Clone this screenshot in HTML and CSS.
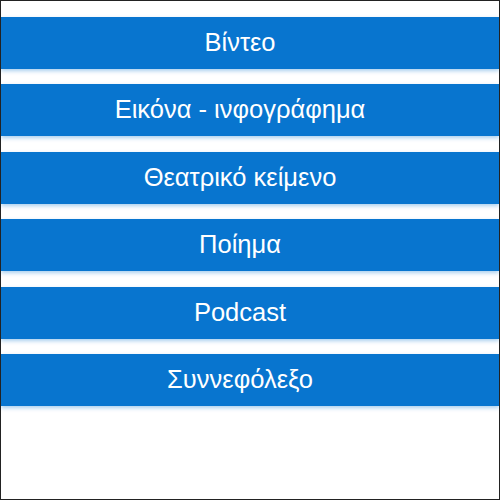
FILE: index.html
```html
<!DOCTYPE html>
<html lang="el">
<head>
<meta charset="utf-8">
<link rel="stylesheet" href="styles.css">
</head>
<body>
<div class="frame">
  <ul class="menu">
    <li class="item">Βίντεο</li>
    <li class="item">Εικόνα - ινφογράφημα</li>
    <li class="item">Θεατρικό κείμενο</li>
    <li class="item">Ποίημα</li>
    <li class="item">Podcast</li>
    <li class="item">Συννεφόλεξο</li>
  </ul>
</div>
</body>
</html>
```
FILE: styles.css
```css
html, body {
  margin: 0;
  padding: 0;
  background: #fff;
}
.frame {
  box-sizing: border-box;
  width: 500px;
  height: 500px;
  border: 1px solid #222;
  padding-top: 16px;
  overflow: hidden;
}
.menu {
  list-style: none;
  margin: 0;
  padding: 0;
  display: flex;
  flex-direction: column;
  gap: 15.4px;
}
.item {
  height: 52px;
  background: #0875cf;
  color: #fff;
  font-family: "Liberation Sans", Arial, sans-serif;
  font-size: 25.5px;
  display: flex;
  align-items: center;
  justify-content: center;
  padding-bottom: 1px;
  padding-right: 20px;
  box-sizing: border-box;
  box-shadow: 0 2px 4px rgba(8, 117, 207, 0.35);
}
```
